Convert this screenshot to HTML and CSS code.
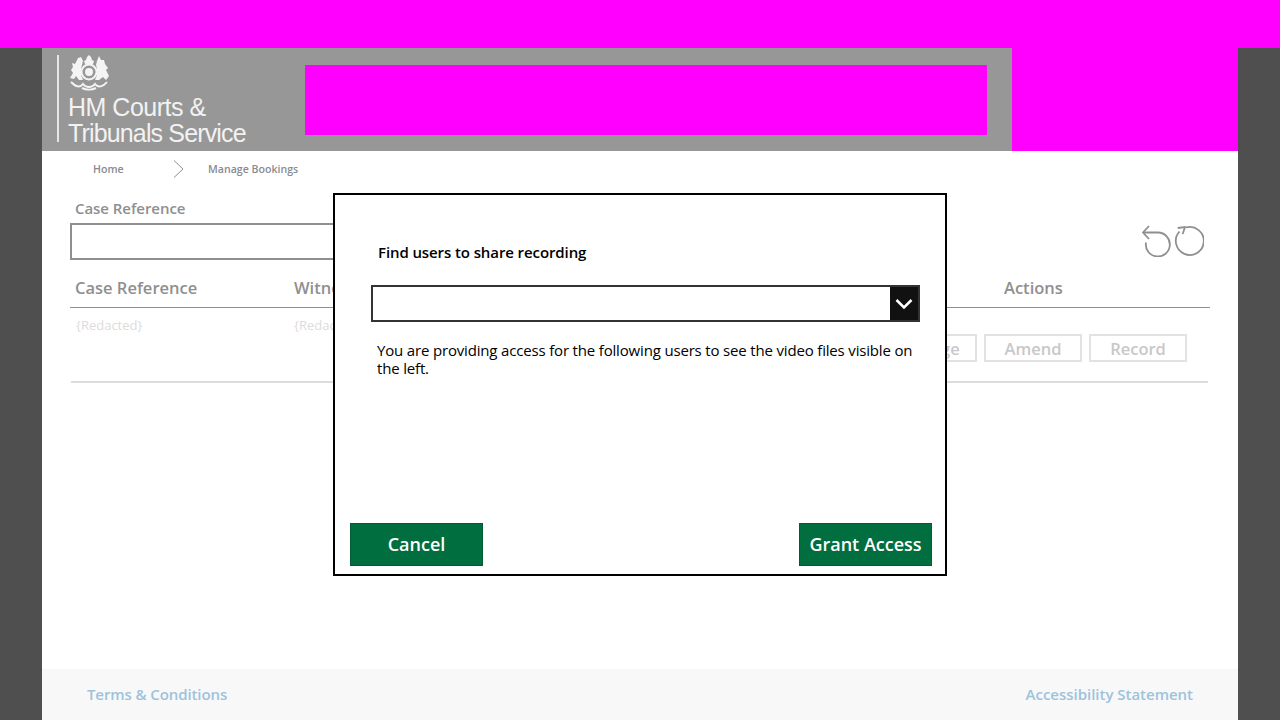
FILE: index.html
```html
<!DOCTYPE html>
<html lang="en">
<head>
    <meta charset="UTF-8">
    <title>Manage Bookings</title>
    <link rel="stylesheet" href="styles.css">
</head>
<body>
    <div class="topbar"></div>
    <div class="page">
        <header class="header">
            <div class="brand">
                <div class="logo">
                    <svg class="crest" viewBox="1 0 40 36" width="42" height="36" aria-hidden="true">
                        <path class="crest-fill" d="M18 5 L19 2 L21 0 L23 2 L24 5 L26 6 L25 9 L17 9 L16 6 Z"/>
                        <circle class="crest-ring" cx="21" cy="17" r="7.5"/>
                        <circle class="crest-fill" cx="21" cy="17" r="4"/>
                        <path class="crest-fill" d="M10 3 L13 2 L15 6 L14 10 L13 14 L13 20 L15 25 L11 25 L8 21 L6 24 L2 23 L5 18 L3 15 L5 12 L4 8 L7 9 Z"/>
                        <path class="crest-fill" d="M31 1 L33 5 L36 5 L37 9 L40 13 L38 15 L41 21 L38 25 L35 22 L31 25 L27 25 L29 20 L29 14 L28 10 L29 6 Z"/>
                        <path class="crest-ribbon" d="M3 27 C8 32 12 33 15 29 C18 33 24 33 27 29 C30 33 35 32 39 27"/>
                        <path class="crest-ribbon" d="M14 33 C18 35 24 35 28 33"/>
                    </svg>
                    <div class="logo-name">HM Courts &amp;<br><span class="logo-second">Tribunals Service</span></div>
                </div>
                <div class="banner"></div>
            </div>
            <div class="header-fill"></div>
        </header>

        <nav class="crumbs">
            <span class="crumb-home">Home</span>
            <svg class="crumb-arrow" viewBox="0 0 11 18" width="11" height="18" aria-hidden="true">
                <path d="M1 0.5 L10 9 L1 17.5"/>
            </svg>
            <span>Manage Bookings</span>
        </nav>

        <main class="content">
            <div class="search">
                <div class="search-field">
                    <label class="search-label">Case Reference</label>
                    <input class="search-input" type="text">
                </div>
                <div class="history">
                    <svg viewBox="0 0 30 32" width="30" height="32" aria-hidden="true">
                        <path d="M1 7.500 L16 7.500 A12 12 0 1 1 4 17.500"/>
                        <path d="M7 1 L1 7.500 L7 14"/>
                    </svg>
                    <svg viewBox="0 0 30 32" width="30" height="32" aria-hidden="true">
                        <path d="M12 2.500 A14 14 0 1 1 5.500 6.500"/>
                        <path d="M3.700 3 L11 2 L8.700 9"/>
                    </svg>
                </div>
            </div>

            <div class="table-head">
                <span class="col-case">Case Reference</span>
                <span class="col-witness">Witness</span>
                <span class="col-actions">Actions</span>
            </div>
            <div class="table-row">
                <span class="col-case">{Redacted}</span>
                <span class="col-witness">{Redacted}</span>
                <div class="row-buttons">
                    <button class="row-btn">Manage</button>
                    <button class="row-btn">Amend</button>
                    <button class="row-btn">Record</button>
                </div>
            </div>
        </main>

        <footer class="footer">
            <a>Terms &amp; Conditions</a>
            <a class="footer-right">Accessibility Statement</a>
        </footer>
    </div>

    <div class="modal">
        <h3 class="modal-title">Find users to share recording</h3>
        <div class="select">
            <span class="select-arrow">
                <svg viewBox="0 0 18 12" width="18" height="12" aria-hidden="true">
                    <path d="M1.500 2 L9 9.500 L16.500 2"/>
                </svg>
            </span>
        </div>
        <p class="modal-text">You are providing access for the following users to see the video files visible on the left.</p>
        <div class="modal-buttons">
            <button class="green-btn">Cancel</button>
            <button class="green-btn">Grant Access</button>
        </div>
    </div>
</body>
</html>
```

FILE: styles.css
```css
html, body {
    height: 100%;
}
body {
    margin: 0;
    overflow: hidden;
    background-color: #4f4f4f;
    font-family: "Open Sans", Arial, sans-serif;
}
.topbar {
    height: 48px;
    background-color: #ff00ff;
}
.page {
    display: flex;
    flex-direction: column;
    width: 1196px;
    height: 672px;
    margin-left: 42px;
    background-color: #fff;
}

/* header */
.header {
    display: flex;
    height: 103px;
}
.brand {
    display: flex;
    align-items: flex-start;
    width: 970px;
    background-color: #979797;
}
.logo {
    width: 247px;
    height: 87px;
    margin: 7px 0 0 15px;
    padding-left: 9px;
    border-left: 2px solid #e6e6e6;
    box-sizing: border-box;
}
.crest {
    display: block;
}
.crest-fill {
    fill: #f4f4f4;
}
.crest-ring {
    fill: none;
    stroke: #f4f4f4;
    stroke-width: 2;
}
.crest-ribbon {
    fill: none;
    stroke: #f4f4f4;
    stroke-width: 2;
}
.logo-name {
    margin-top: 3px;
    color: #f2f2f2;
    font-family: "Liberation Sans", Arial, sans-serif;
    font-size: 25px;
    line-height: 26px;
    letter-spacing: -0.5px;
    white-space: nowrap;
}
.logo-second {
    letter-spacing: -0.85px;
}
.banner {
    width: 682px;
    height: 70px;
    margin: 17px 0 0 1px;
    background-color: #ff00ff;
}
.header-fill {
    flex: 1;
    background-color: #ff00ff;
}

/* breadcrumb */
.crumbs {
    display: flex;
    align-items: center;
    height: 36px;
    padding-left: 51px;
    box-sizing: border-box;
    color: #8a8a92;
    font-size: 10.600px;
    font-weight: 600;
}
.crumb-home {
    width: 80px;
}
.crumb-arrow {
    margin-right: 24px;
}
.crumb-arrow path {
    fill: none;
    stroke: #8f8f8f;
    stroke-width: 1;
}

/* search + table */
.content {
    flex: 1;
    padding-left: 28px;
}
.search {
    display: flex;
    justify-content: space-between;
    width: 1134px;
    margin-top: 10px;
}
.search-label {
    display: block;
    margin-left: 5px;
    color: #8f8f8f;
    font-size: 15px;
    font-weight: 600;
    line-height: 22px;
    letter-spacing: -0.05px;
}
.search-input {
    display: block;
    width: 320px;
    height: 37px;
    margin-top: 4px;
    box-sizing: border-box;
    border: 2px solid #8f8f8f;
    border-radius: 0;
    outline: none;
}
.history {
    display: flex;
    gap: 2px;
    margin-top: 28px;
}
.history path {
    fill: none;
    stroke: #8f8f8f;
    stroke-width: 1.800;
}
.table-head {
    display: flex;
    align-items: center;
    width: 1140px;
    height: 45px;
    margin-top: 3px;
    padding-top: 5px;
    box-sizing: border-box;
    border-bottom: 1px solid #8f8f8f;
    color: #8f8f8f;
    font-size: 16.500px;
    font-weight: 600;
}
.col-case {
    width: 219px;
    margin-left: 5px;
}
.col-witness {
    width: 710px;
}
.table-row {
    display: flex;
    width: 1137px;
    height: 73px;
    margin-left: 1px;
    border-bottom: 2px solid #dcdcdc;
    color: #dcdcdc;
    font-size: 13px;
}
.table-row .col-case,
.table-row .col-witness {
    padding-top: 8px;
}
.table-row .col-case {
    width: 218px;
    margin-left: 5px;
}
.table-row .col-witness {
    width: 585px;
}
.row-buttons {
    display: flex;
    gap: 7px;
    margin-top: 26px;
}
.row-btn {
    width: 98px;
    height: 28px;
    padding: 0;
    box-sizing: border-box;
    border: 2px solid #e2e2e2;
    background-color: #fff;
    color: #c8c8c8;
    font-family: inherit;
    font-size: 16.500px;
    font-weight: 600;
}

/* footer */
.footer {
    display: flex;
    justify-content: space-between;
    align-items: center;
    height: 51px;
    padding: 0 45px 2px;
    box-sizing: border-box;
    background-color: #f8f8f8;
    color: #9dc3dc;
    font-size: 15px;
    font-weight: 600;
    letter-spacing: -0.1px;
}
.footer-right {
    letter-spacing: -0.02px;
}

/* share dialog, sits over the page */
.modal {
    position: absolute;
    left: 333px;
    top: 193px;
    display: flex;
    flex-direction: column;
    width: 614px;
    height: 383px;
    box-sizing: border-box;
    border: 2px solid #000;
    background-color: #fff;
    color: #000;
}
.modal-title {
    margin: 46px 0 0 43px;
    font-size: 15px;
    font-weight: 600;
    line-height: 22px;
    letter-spacing: -0.1px;
}
.select {
    display: flex;
    justify-content: flex-end;
    height: 37px;
    margin: 22px 25px 0 36px;
    box-sizing: border-box;
    border: 2px solid #333;
}
.select-arrow {
    display: flex;
    align-items: center;
    justify-content: center;
    width: 28px;
    background-color: #111;
}
.select-arrow path {
    fill: none;
    stroke: #fff;
    stroke-width: 2.500;
}
.modal-text {
    margin: 19px 30px 0 42px;
    font-size: 15px;
    line-height: 18px;
    letter-spacing: -0.17px;
}
.modal-buttons {
    display: flex;
    justify-content: space-between;
    margin: auto 13px 8px 15px;
}
.green-btn {
    width: 133px;
    height: 43px;
    padding: 0 0 2px;
    border: 1px solid #015c35;
    border-radius: 0;
    background-color: #016e3f;
    color: #fff;
    font-family: inherit;
    font-size: 18px;
    font-weight: 600;
}
```
